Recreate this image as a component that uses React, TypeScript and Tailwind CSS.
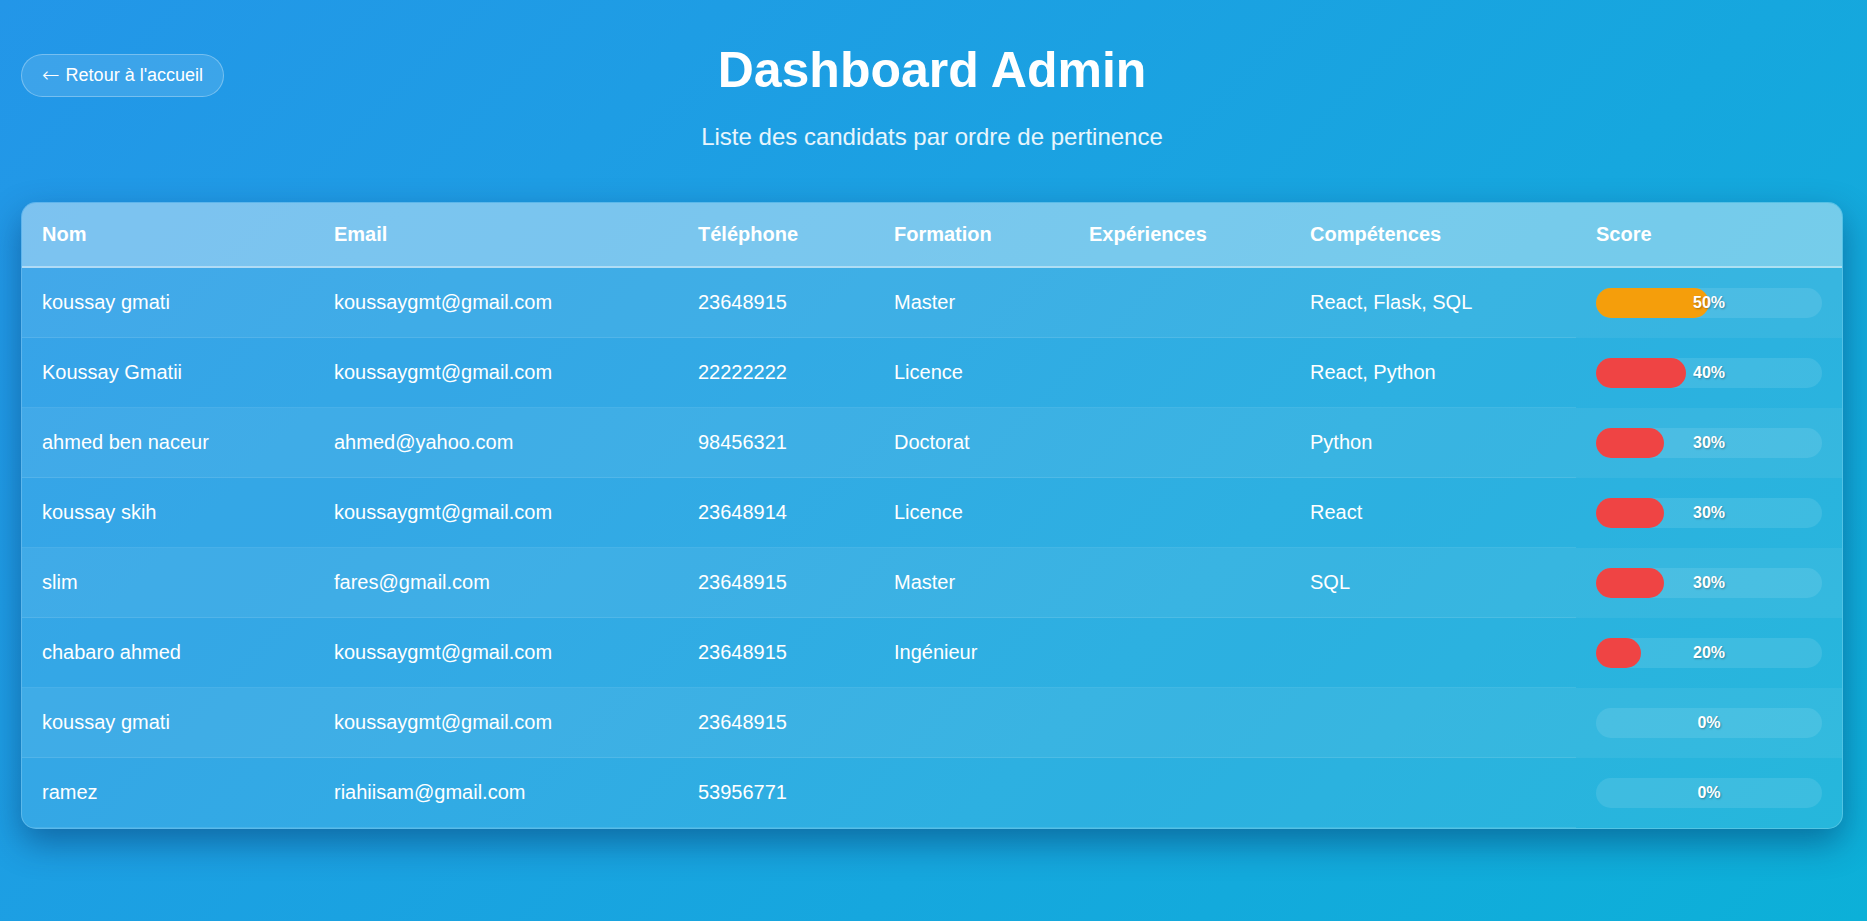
import React from 'react';

interface Candidate {
  nom: string;
  email: string;
  telephone: string;
  formation: string;
  experiences: string;
  competences: string;
  score: number;
}

const candidates: Candidate[] = [
  { nom: 'koussay gmati', email: 'koussaygmt@gmail.com', telephone: '23648915', formation: 'Master', experiences: '', competences: 'React, Flask, SQL', score: 50 },
  { nom: 'Koussay Gmatii', email: 'koussaygmt@gmail.com', telephone: '22222222', formation: 'Licence', experiences: '', competences: 'React, Python', score: 40 },
  { nom: 'ahmed ben naceur', email: 'ahmed@yahoo.com', telephone: '98456321', formation: 'Doctorat', experiences: '', competences: 'Python', score: 30 },
  { nom: 'koussay skih', email: 'koussaygmt@gmail.com', telephone: '23648914', formation: 'Licence', experiences: '', competences: 'React', score: 30 },
  { nom: 'slim', email: 'fares@gmail.com', telephone: '23648915', formation: 'Master', experiences: '', competences: 'SQL', score: 30 },
  { nom: 'chabaro ahmed', email: 'koussaygmt@gmail.com', telephone: '23648915', formation: 'Ingénieur', experiences: '', competences: '', score: 20 },
  { nom: 'koussay gmati', email: 'koussaygmt@gmail.com', telephone: '23648915', formation: '', experiences: '', competences: '', score: 0 },
  { nom: 'ramez', email: 'riahiisam@gmail.com', telephone: '53956771', formation: '', experiences: '', competences: '', score: 0 },
];

const headers = ['Nom', 'Email', 'Téléphone', 'Formation', 'Expériences', 'Compétences', 'Score'];

const ScoreBar: React.FC<{ score: number }> = ({ score }) => (
  <div className="relative h-[30px] w-full rounded-full bg-white/10">
    <div
      className={`h-full rounded-full ${score >= 50 ? 'bg-[#f59e0b]' : 'bg-[#ef4444]'}`}
      style={{ width: `${score}%` }}
    />
    <span className="absolute inset-0 flex items-center justify-center text-[16px] font-bold text-white [text-shadow:1px_1px_2px_rgba(0,0,0,0.3)]">
      {score}%
    </span>
  </div>
);

const App: React.FC = () => {
  const cell = 'px-[20px] py-[20px] border-b border-white/10 leading-[23px]';

  return (
    <div className="min-h-screen bg-linear-135 from-[#2396e8] to-[#0cb0d8] pl-[21px] pr-[24px] pt-[42px] pb-[40px] font-['Liberation_Sans',Arial,sans-serif] text-white">
      <header className="grid grid-cols-[1fr_auto_1fr] items-start">
        <button className="mt-[12px] flex items-center justify-self-start rounded-full border border-white/30 bg-white/[0.12] px-[20px] py-[10px] text-[18px] leading-[21px] text-white">
          <span className="mr-[6px] font-['DejaVu_Sans',sans-serif] text-[21px] leading-[21px] font-light">←</span>
          Retour à l'accueil
        </button>
        <h1 className="text-[50px] font-bold leading-[57px]">Dashboard Admin</h1>
        <div />
      </header>
      <p className="mt-[24px] text-center text-[24px] leading-[28px] text-white/90">
        Liste des candidats par ordre de pertinence
      </p>

      <div className="mt-[51px] overflow-hidden rounded-[15px] border border-white/20 bg-white/10 shadow-[0_14px_34px_rgba(0,40,90,0.45)]">
        <table className="w-full table-fixed border-separate border-spacing-0 text-left text-[20px]">
          <colgroup>
            <col className="w-[292px]" />
            <col className="w-[364px]" />
            <col className="w-[196px]" />
            <col className="w-[195px]" />
            <col className="w-[221px]" />
            <col className="w-[286px]" />
            <col className="w-[266px]" />
          </colgroup>
          <thead>
            <tr className="bg-white/35">
              {headers.map((h) => (
                <th key={h} className="border-b-2 border-white/40 px-[20px] py-[20px] font-bold leading-[23px]">
                  {h}
                </th>
              ))}
            </tr>
          </thead>
          <tbody>
            {candidates.map((c, i) => (
              <tr key={`${c.nom}-${i}`} className={i % 2 === 0 ? 'bg-white/[0.06]' : ''}>
                <td className={cell}>{c.nom}</td>
                <td className={cell}>{c.email}</td>
                <td className={cell}>{c.telephone}</td>
                <td className={cell}>{c.formation}</td>
                <td className={cell}>{c.experiences}</td>
                <td className={cell}>{c.competences}</td>
                <td className="px-[20px] py-[20px]">
                  <ScoreBar score={c.score} />
                </td>
              </tr>
            ))}
          </tbody>
        </table>
      </div>
    </div>
  );
};

export default App;
